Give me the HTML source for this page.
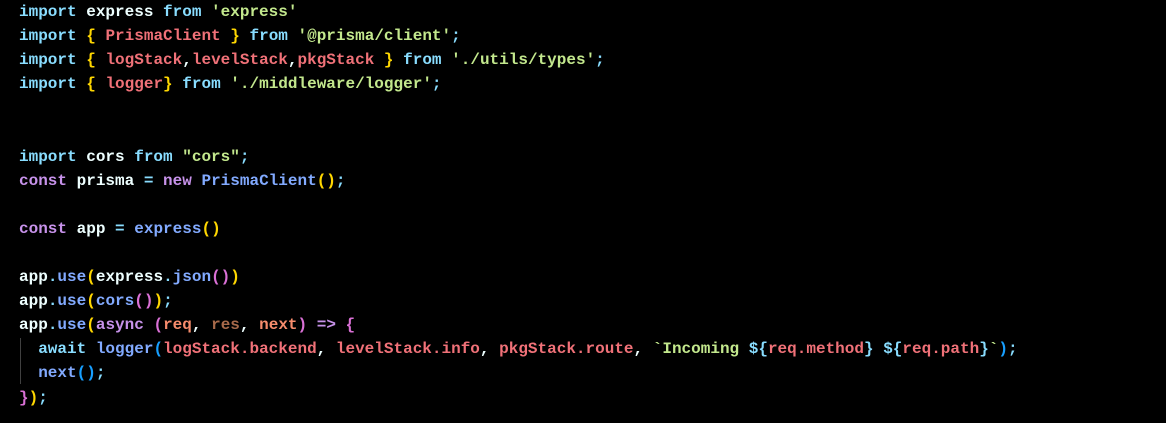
<!DOCTYPE html>
<html><head><meta charset="utf-8"><style>
html,body{margin:0;padding:0;background:#000;width:1166px;height:423px;overflow:hidden}
pre{margin:0;position:absolute;left:19px;top:0;font-family:"Liberation Mono",monospace;font-size:16px;font-weight:bold;line-height:24.1px;color:#eeffff;white-space:pre}
.k{color:#89ddff}.p{color:#c792ea}.f{color:#82aaff}.s{color:#c3e88d}.v{color:#f07178}.o{color:#f78c6c}.d{color:#a86a4a}
.b1{color:#ffd700}.b2{color:#da70d6}.b3{color:#179fff}.w{color:#eeffff}
.guide{position:absolute;left:20px;top:338px;width:1px;height:46px;background:#404040}
</style></head><body>
<div class="guide"></div>
<pre><span class="k">import</span> express <span class="k">from</span> <span class="s">'express'</span>
<span class="k">import</span> <span class="b1">{</span> <span class="v">PrismaClient</span> <span class="b1">}</span> <span class="k">from</span> <span class="s">'@prisma/client'</span><span class="k">;</span>
<span class="k">import</span> <span class="b1">{</span> <span class="v">logStack</span>,<span class="v">levelStack</span>,<span class="v">pkgStack</span> <span class="b1">}</span> <span class="k">from</span> <span class="s">'./utils/types'</span><span class="k">;</span>
<span class="k">import</span> <span class="b1">{</span> <span class="v">logger</span><span class="b1">}</span> <span class="k">from</span> <span class="s">'./middleware/logger'</span><span class="k">;</span>


<span class="k">import</span> cors <span class="k">from</span> <span class="s">"cors"</span><span class="k">;</span>
<span class="p">const</span> prisma <span class="k">=</span> <span class="p">new</span> <span class="f">PrismaClient</span><span class="b1">()</span><span class="k">;</span>

<span class="p">const</span> app <span class="k">=</span> <span class="f">express</span><span class="b1">()</span>

app<span class="k">.</span><span class="f">use</span><span class="b1">(</span>express<span class="k">.</span><span class="f">json</span><span class="b2">()</span><span class="b1">)</span>
app<span class="k">.</span><span class="f">use</span><span class="b1">(</span><span class="f">cors</span><span class="b2">()</span><span class="b1">)</span><span class="k">;</span>
app<span class="k">.</span><span class="f">use</span><span class="b1">(</span><span class="p">async</span> <span class="b2">(</span><span class="o">req</span>, <span class="d">res</span>, <span class="o">next</span><span class="b2">)</span> <span class="p">=&gt;</span> <span class="b2">{</span>
  <span class="k">await</span> <span class="f">logger</span><span class="b3">(</span><span class="v">logStack.backend</span>, <span class="v">levelStack.info</span>, <span class="v">pkgStack.route</span>, <span class="s">`Incoming </span><span class="k">${</span><span class="v">req.method</span><span class="k">}</span><span class="s"> </span><span class="k">${</span><span class="v">req.path</span><span class="k">}</span><span class="s">`</span><span class="b3">)</span><span class="k">;</span>
  <span class="f">next</span><span class="b3">()</span><span class="k">;</span>
<span class="b2">}</span><span class="b1">)</span><span class="k">;</span></pre>
</body></html>
